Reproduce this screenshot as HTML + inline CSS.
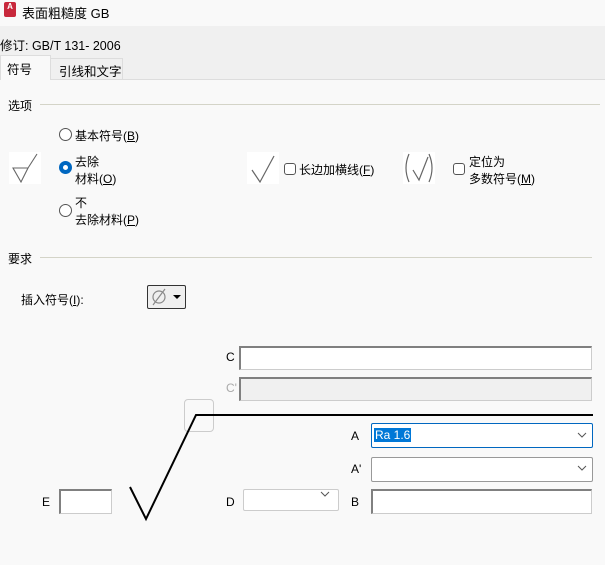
<!DOCTYPE html>
<html><head><meta charset="utf-8"><style>
*{box-sizing:border-box;margin:0;padding:0}
body{width:605px;height:565px;background:#f9f9f9;font-family:"Liberation Sans","Noto Sans CJK SC",sans-serif;font-size:12px;color:#000;position:relative;overflow:hidden}
.a{position:absolute;white-space:nowrap}
.in{position:absolute;background:#fff;border:1px solid #ccc;border-top:2px solid #808080;border-left:2px solid #808080}
.cb{position:absolute;background:#fff;border:1px solid #999;border-radius:2px}
.rad{position:absolute;width:13px;height:13px;border:1px solid #555;border-radius:50%;background:#fff}
.chk{position:absolute;width:12px;height:12px;border:1px solid #555;border-radius:3px;background:#fff}
.ln{position:absolute;height:1px;background:#d4d4c8}
.img{position:absolute;width:32px;height:32px;background:#fff}
u{text-decoration:underline}
</style></head><body>
<div class="a" style="left:0;top:0;width:605px;height:26px;background:#f9f9f9"></div>
<div class="a" style="left:0;top:26px;width:605px;height:53px;background:#f0f0f0"></div>
<div class="a" style="left:4px;top:2px;width:12px;height:15px;background:#c8283c;border-radius:2px;color:#fff;font-size:8px;font-weight:bold;text-align:center;line-height:10px">A</div>
<div class="a" style="left:22px;top:3px;font-size:13px">表面粗糙度 GB</div>
<div class="a" style="left:0;top:35px;font-size:12.5px">修订: GB/T 131- 2006</div>
<div class="a" style="left:0;top:55px;width:51px;height:25px;background:#f9f9f9;border:1px solid #ddd;border-bottom:none"></div>
<div class="a" style="left:7px;top:59px;font-size:12.5px">符号</div>
<div class="a" style="left:50px;top:58px;width:73px;height:21px;background:#f0f0f0;border:1px solid #ddd;border-bottom:none"></div>
<div class="a" style="left:59px;top:61px;font-size:12.5px">引线和文字</div>
<div class="a" style="left:51px;top:79px;width:554px;height:1px;background:#ddd"></div>

<div class="a" style="left:8px;top:97px">选项</div>
<div class="ln" style="left:40px;top:104px;width:560px"></div>

<div class="img" style="left:9px;top:152px"><svg width="32" height="32"><path d="M4 16 H19 L12 30 Z M19 16 L28 2" stroke="#666" fill="none" stroke-width="1.1"/></svg></div>
<div class="rad" style="left:59px;top:128px"></div>
<div class="a" style="left:75px;top:127px">基本符号(<u>B</u>)</div>
<div class="rad" style="left:59px;top:161px;border:4px solid #0067c0"></div>
<div class="a" style="left:75px;top:153px">去除</div>
<div class="a" style="left:75px;top:170px">材料(<u>O</u>)</div>
<div class="rad" style="left:59px;top:204px"></div>
<div class="a" style="left:75px;top:194px">不</div>
<div class="a" style="left:75px;top:211px">去除材料(<u>P</u>)</div>

<div class="img" style="left:247px;top:152px"><svg width="32" height="32"><path d="M5 18 L13 30 L27 4" stroke="#666" fill="none" stroke-width="1.2"/></svg></div>
<div class="chk" style="left:284px;top:163px"></div>
<div class="a" style="left:299px;top:161px">长边加横线(<u>F</u>)</div>

<div class="img" style="left:403px;top:152px"><svg width="32" height="32"><path d="M6 2 Q0 16 6 30 M26 2 Q32 16 26 30 M10 18 L16 28 L25 5" stroke="#666" fill="none" stroke-width="1.2"/></svg></div>
<div class="chk" style="left:453px;top:163px"></div>
<div class="a" style="left:469px;top:153px">定位为</div>
<div class="a" style="left:469px;top:170px">多数符号(<u>M</u>)</div>

<div class="a" style="left:8px;top:250px">要求</div>
<div class="ln" style="left:40px;top:257px;width:552px"></div>

<div class="a" style="left:21px;top:291px">插入符号(<u>I</u>):</div>
<div class="a" style="left:147px;top:285px;width:39px;height:24px;border:1px solid #333;border-radius:2px;background:#efefef"></div>
<svg class="a" style="left:150px;top:287px" width="20" height="20"><circle cx="9" cy="10" r="6" stroke="#888" fill="none" stroke-width="1.2"/><path d="M3 18 L15 2" stroke="#888" stroke-width="1.2"/></svg>
<div class="a" style="left:173px;top:295px;width:0;height:0;border-left:4px solid transparent;border-right:4px solid transparent;border-top:4px solid #000"></div>

<div class="a" style="left:226px;top:350px">C</div>
<div class="in" style="left:239px;top:346px;width:353px;height:24px"></div>
<div class="a" style="left:226px;top:381px;color:#aaa">C'</div>
<div class="in" style="left:239px;top:377px;width:353px;height:24px;background:#f0f0f0"></div>

<div class="a" style="left:184px;top:399px;width:30px;height:33px;border:1px solid #ccc;border-radius:4px;background:#f9f9f9"></div>

<div class="a" style="left:351px;top:429px">A</div>
<div class="cb" style="left:371px;top:423px;width:222px;height:25px;border-color:#0067c0"></div>
<div class="a" style="left:374px;top:428px;background:#0078d7;color:#fff;padding:0 1px">Ra 1.6</div>
<div class="a" style="left:351px;top:462px">A'</div>
<div class="cb" style="left:371px;top:457px;width:222px;height:25px"></div>

<div class="a" style="left:42px;top:495px">E</div>
<div class="in" style="left:59px;top:489px;width:53px;height:25px"></div>
<div class="a" style="left:226px;top:495px">D</div>
<div class="cb" style="left:243px;top:489px;width:96px;height:22px;border-color:#ccc"></div>
<div class="a" style="left:351px;top:495px">B</div>
<div class="in" style="left:371px;top:489px;width:221px;height:25px"></div>
<svg class="a" style="left:0;top:0" width="605" height="565"><path d="M130 487 L146 519 L196 415 L593 415" stroke="#000" stroke-width="2" fill="none"/>
<path d="M578 433 L582 437 L586 433 M578 466 L582 470 L586 466 M321 492 L325 496 L329 492" stroke="#555" fill="none" stroke-width="1"/></svg>
</body></html>
